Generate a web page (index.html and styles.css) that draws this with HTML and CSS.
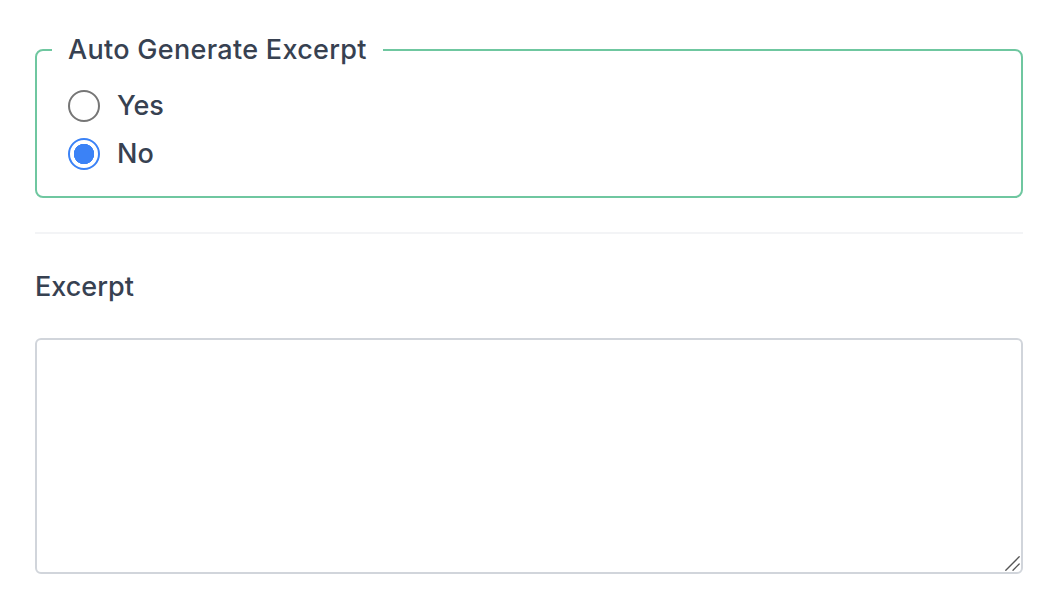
FILE: index.html
```html
<!DOCTYPE html>
<html lang="en">
<head>
<meta charset="utf-8">
<title>Excerpt settings</title>
<link rel="stylesheet" href="styles.css">
</head>
<body>
<main class="page">
  <fieldset class="group">
    <legend class="group-legend">Auto Generate Excerpt</legend>
    <div class="options">
      <label class="option">
        <input type="radio" name="auto" class="radio">
        <span>Yes</span>
      </label>
      <label class="option">
        <input type="radio" name="auto" class="radio" checked>
        <span>No</span>
      </label>
    </div>
  </fieldset>
  <hr class="divider">
  <label class="field-label" for="excerpt">Excerpt</label>
  <div class="textarea-wrap">
    <textarea id="excerpt" class="textarea"></textarea>
    <svg class="grip" width="15" height="15" viewBox="0 0 15 15" aria-hidden="true">
      <path d="M0.8 14.2 L14.2 0.8 M8 14.2 L14.2 8" stroke="#555" stroke-width="1.3" fill="none" stroke-linecap="round"/>
    </svg>
  </div>
</main>
</body>
</html>
```

FILE: styles.css
```css
* { box-sizing: border-box; }
html, body { margin: 0; background: #ffffff; }
body {
  font-family: Inter, "Noto Sans", "Liberation Sans", sans-serif;
  color: #374151;
}
.page {
  width: 988px;
  margin-left: 35px;
  padding-top: 34px;
  display: flex;
  flex-direction: column;
}
.group {
  margin: 0;
  border: 2px solid #6fc7a0;
  border-radius: 8px;
  padding: 22px 16px 24px 15px;
}
.group-legend {
  padding: 0 16px;
  margin: 0;
  font-size: 27px;
  line-height: 32px;
  font-weight: 500;
  letter-spacing: 0.3px;
  color: #374151;
}
.options {
  padding-left: 16px;
  display: flex;
  flex-direction: column;
  gap: 12px;
}
.option {
  display: flex;
  align-items: center;
  gap: 17px;
  height: 36px;
  font-size: 27px;
  font-weight: 500;
  line-height: 32px;
  cursor: pointer;
}
.radio {
  appearance: none;
  -webkit-appearance: none;
  margin: 0;
  width: 32px;
  height: 32px;
  border-radius: 50%;
  border: 2px solid #767676;
  background: #fff;
  flex: none;
}
.radio:checked {
  border-color: #3b82f6;
  background: radial-gradient(circle, #3b82f6 0 10px, #fff 10.5px);
}
.divider {
  margin: 34px 0 0;
  border: 0;
  height: 2px;
  background: #f3f4f6;
}
.field-label {
  margin-top: 37px;
  font-size: 27px;
  line-height: 32px;
  font-weight: 500;
  color: #374151;
}
.textarea-wrap {
  position: relative;
  margin-top: 35px;
  height: 236px;
}
.textarea {
  display: block;
  width: 100%;
  height: 100%;
  border: 2px solid #d1d5db;
  border-radius: 6px;
  font: inherit;
  resize: none;
}
.grip {
  position: absolute;
  right: 3px;
  bottom: 3px;
  pointer-events: none;
}
```
